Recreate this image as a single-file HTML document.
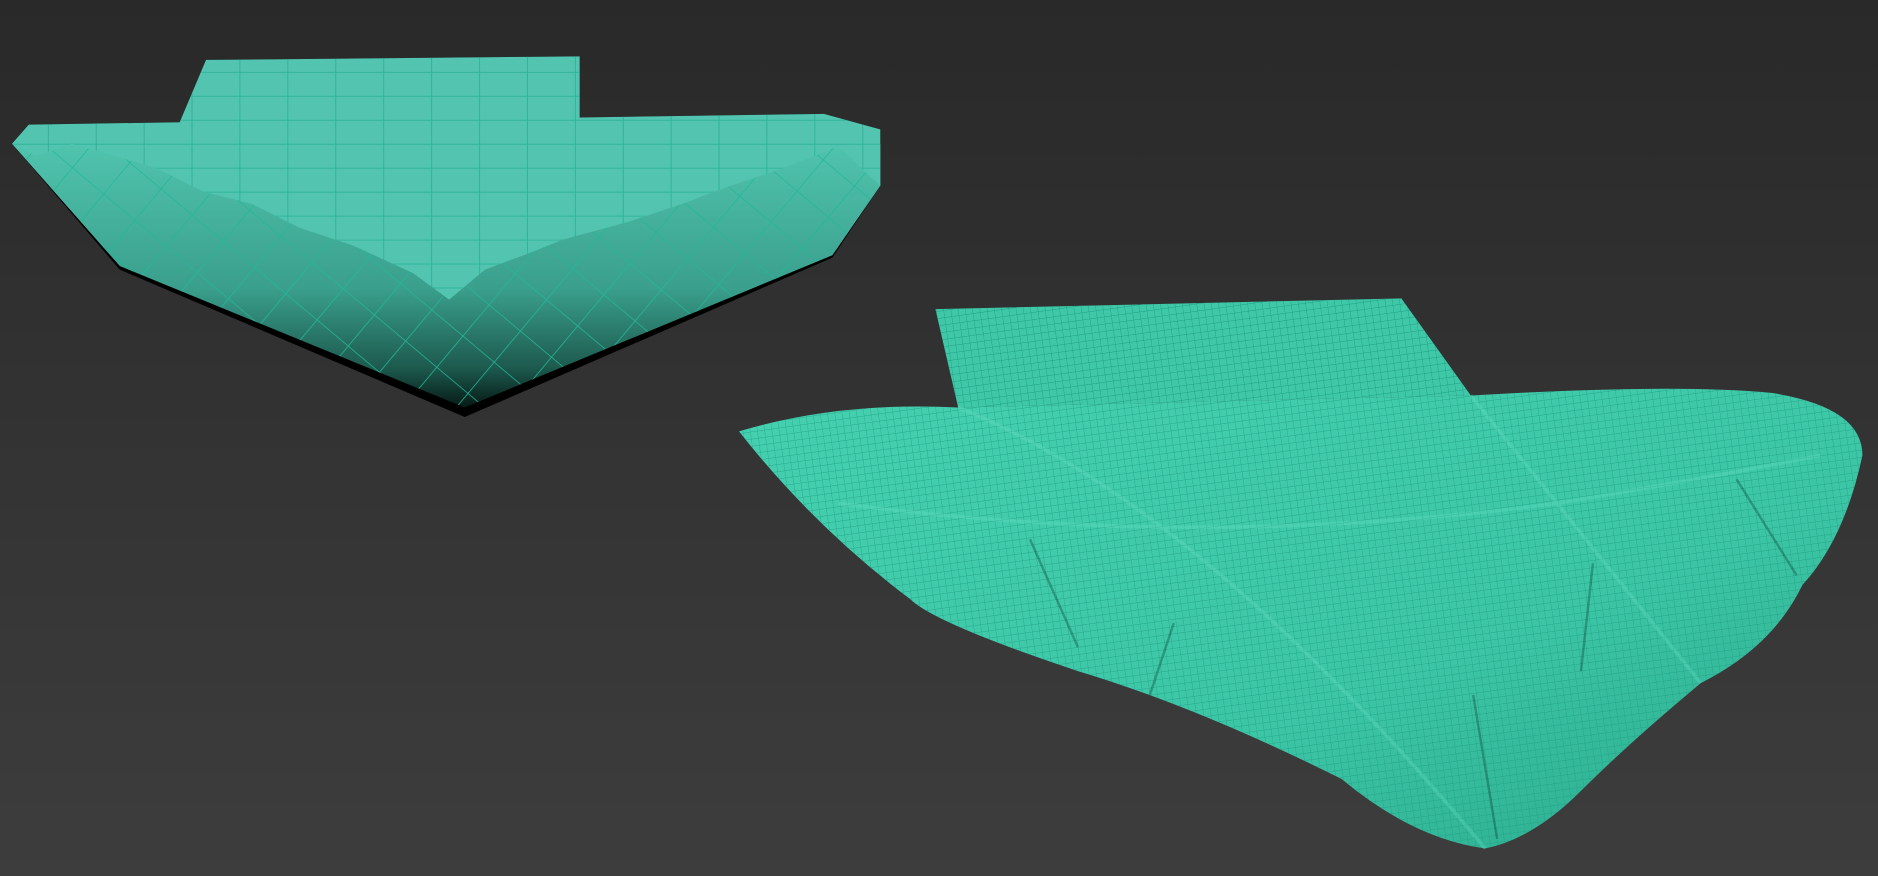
<!DOCTYPE html>
<html><head><style>html,body{margin:0;padding:0;width:1878px;height:876px;overflow:hidden;background:#333}</style></head>
<body>
<svg width="1878" height="876" viewBox="0 0 1568 731" preserveAspectRatio="none" xmlns="http://www.w3.org/2000/svg">
<defs>
<linearGradient id="bg" x1="0" y1="0" x2="0" y2="1"><stop offset="0" stop-color="#292929"/><stop offset="1" stop-color="#3d3d3d"/></linearGradient>
<pattern id="grid" width="40" height="20" patternUnits="userSpaceOnUse"><path d="M0 0H40M0 0V20" stroke="#22ae92" stroke-width="1.3" fill="none"/></pattern>
<pattern id="diam" width="34" height="34" patternUnits="userSpaceOnUse" patternTransform="rotate(40)"><path d="M0 0H34M0 0V34" stroke="#22b898" stroke-width="1.3" fill="none"/></pattern>
<pattern id="mesh" width="6" height="6" patternUnits="userSpaceOnUse" patternTransform="rotate(-8)"><path d="M0 0H6M0 0V6" stroke="#1f9f84" stroke-width="0.7" fill="none"/></pattern>
<linearGradient id="side" x1="0" y1="0" x2="0" y2="1"><stop offset="0" stop-color="#50c4ae"/><stop offset="0.55" stop-color="#3a9f8c"/><stop offset="0.85" stop-color="#1d5a4e"/><stop offset="1" stop-color="#061a16"/></linearGradient>
<linearGradient id="pil" x1="0" y1="0" x2="1" y2="1"><stop offset="0" stop-color="#45d0b0"/><stop offset="0.6" stop-color="#3cc6a6"/><stop offset="1" stop-color="#2aa88b"/></linearGradient>
</defs>
<rect width="1568" height="731" fill="url(#bg)"/>
<!-- left object -->
<polygon points="10,120 100,225 388,348 695,215 735,155 735,108 688,95 484,98 484,47 172,50 150,102 24,104" fill="#000"/>
<polygon points="10,120 100,222 388,340 695,213 735,155 735,120 10,120" fill="url(#side)"/>
<polygon points="10,120 100,222 388,340 695,213 735,155 735,120 10,120" fill="url(#diam)"/>
<polygon points="10,120 24,104 150,102 172,50 484,47 484,98 688,95 735,108 735,155 700,122 655,140 610,155 570,170 525,185 470,200 445,210 405,225 375,250 345,228 295,205 250,190 210,170 170,160 130,140 95,130 60,120 30,130" fill="#52c4b0"/>
<polygon points="10,120 24,104 150,102 172,50 484,47 484,98 688,95 735,108 735,155 700,122 655,140 610,155 570,170 525,185 470,200 445,210 405,225 375,250 345,228 295,205 250,190 210,170 170,160 130,140 95,130 60,120 30,130" fill="url(#grid)" opacity="0.9"/>
<!-- right object -->
<polygon points="781,258 1170,249 1228,330 800,340" fill="#3fc8a8"/>
<polygon points="781,258 1170,249 1228,330 800,340" fill="url(#mesh)"/>
<path d="M617,360 Q700,335 800,340 L1228,330 Q1400,320 1480,328 Q1555,340 1555,380 Q1540,450 1505,488 Q1480,540 1420,570 Q1360,620 1320,660 Q1280,700 1240,708 Q1180,700 1120,650 Q1000,590 900,560 Q780,520 760,500 Q680,440 617,360 Z" fill="url(#pil)"/>
<path d="M617,360 Q700,335 800,340 L1228,330 Q1400,320 1480,328 Q1555,340 1555,380 Q1540,450 1505,488 Q1480,540 1420,570 Q1360,620 1320,660 Q1280,700 1240,708 Q1180,700 1120,650 Q1000,590 900,560 Q780,520 760,500 Q680,440 617,360 Z" fill="url(#mesh)" opacity="0.8"/>
<path d="M860,450 L900,540 M980,520 L960,580 M1230,580 L1250,700 M1330,470 L1320,560 M1450,400 L1500,480" stroke="#0d3b31" stroke-width="2" opacity="0.35" fill="none"/>
<path d="M800,340 Q1000,420 1240,708 M1228,330 Q1300,420 1420,570 M700,420 Q1000,460 1300,420 Q1420,400 1520,380" stroke="#6ae0c6" stroke-width="3" opacity="0.3" fill="none"/>
</svg>
</body></html>
